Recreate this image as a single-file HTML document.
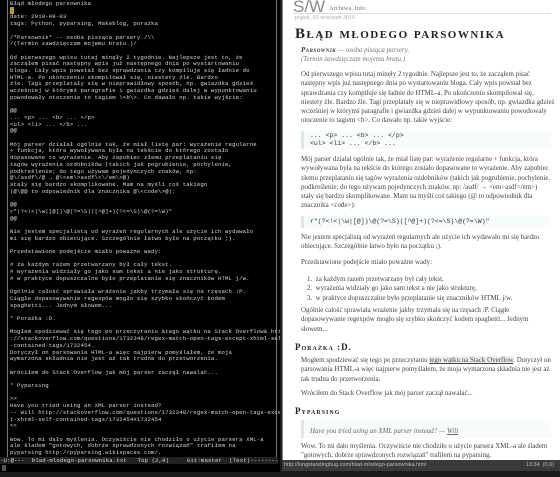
<!DOCTYPE html>
<html><head><meta charset="utf-8"><style>
*{margin:0;padding:0;box-sizing:border-box}
body{width:560px;height:477px;overflow:hidden;background:#1a1c1a;position:relative;font-family:"Liberation Sans",sans-serif}
#term{position:absolute;left:0;top:0;width:280px;height:472px;background:#000;overflow:hidden}
#term .bl{position:absolute;left:7px;top:0;width:1px;height:458px;background:#777}
#term .br{position:absolute;left:276px;top:0;width:1px;height:458px;background:#777}
#tt{position:absolute;left:10px;top:1px;font-family:"Liberation Mono","DejaVu Sans Mono",monospace;font-size:5.65px;letter-spacing:0.14px;line-height:6.7px;color:#d8d8d8;white-space:pre}
#ml{position:absolute;left:0;top:457px;width:278px;height:7px;background:#222;color:#ddd;font-family:"Liberation Mono",monospace;font-size:5.65px;letter-spacing:0.14px;line-height:7px;white-space:pre;overflow:hidden}
#mb{position:absolute;left:0;top:464px;width:278px;height:8px;background:#000}
#mb i{position:absolute;left:2px;top:1px;width:4px;height:6px;background:#555}
#br{position:absolute;left:282px;top:0;width:278px;height:460px;background:#fff;border-left:1px solid #888;font-family:"Liberation Serif",serif;color:#333;overflow:hidden}
.a{position:absolute;white-space:nowrap}
.p{font-size:6.95px;line-height:9.3px;color:#444}
.c{font-family:"Liberation Mono",monospace;font-size:6.5px;color:#333}
.h{font-variant:small-caps;letter-spacing:1px;color:#222}
#sb{position:absolute;left:282px;top:460px;width:278px;height:11px;background:#3a3a3a;color:#bbb;font-size:5.5px;line-height:11px}
</style></head><body>
<div id="term"><div class="bl"></div><div class="br"></div>
<div id="tt">Błąd młodego parsownika
<span style="background:#b8a020;color:#000"> </span>
date: 2010-09-03
tags: Python, pyparsing, Makeblog, porażka

/*Parsownik* -- osoba pisząca parsery./\\
/(Termin zawdzięczam mojemu bratu.)/

Od pierwszego wpisu tutaj minęły 2 tygodnie. Najlepsze jest to, że
zacząłem pisać następny wpis już następnego dnia po wystartowaniu
bloga. Cały wpis powstał bez sprawdzania czy kompiluje się ładnie do
HTML-a. Po ukończeniu skompilował się, niestety źle. Bardzo
źle. Tagi przeplatały się w nieprawidłowy sposób, np. gwiazdka gdzieś
wcześniej w którymś paragrafie i gwiazdka gdzieś dalej w wypunktowaniu
powodowały otoczenie to tagiem \&lt;b\&gt;. Co dawało np. takie wyjście:

@@
... &lt;p&gt; ... &lt;b&gt; ... &lt;/p&gt;
&lt;ul&gt; &lt;li&gt; ... &lt;/b&gt; ...
@@

Mój parser działał ogólnie tak, że miał listę par: wyrażenie regularne
+ funkcja, która wywoływana była na tekście do którego zostało
dopasowane to wyrażenie. Aby zapobiec złemu przeplataniu się
tagów wyrażenia ozdobników (takich jak pogrubienie, pochylenie,
podkreślenie; do tego używam pojedynczych znaków, np:
@\/asdf\/@ → @\&lt;em\&gt;asdf\&lt;\/em\&gt;@)
stały się bardzo skomplikowane. Mam na myśli coś takiego
(@\@@ to odpowiednik dla znacznika @\&lt;code\&gt;@):

@@
r"(?&lt;!&lt;|\w|[@])\@(?=\S)([^@]+)(?&lt;=\S)\@(?=\W)"
@@

Nie jestem specjalistą od wyrażeń regularnych ale użycie ich wydawało
mi się bardzo obiecujące. Szczególnie łatwo było na początku ;).

Przedstawione podejście miało poważne wady:

# za każdym razem przetwarzany był cały tekst.
# wyrażenia widziały go jako sam tekst a nie jako strukturę.
# w praktyce dopuszczalne było przeplatanie się znaczników HTML j/w.

Ogólnie całość sprawiała wrażenie jakby trzymała się na rzęsach :P.
Ciągłe dopasowywanie regexpów mogło się szybko skończyć kodem
spaghetti... Jednym słowem...

* Porażka :D.

Mogłem spodziewać się tego po przeczytaniu &amp;tego wątku na Stack Overflow&amp; http
://stackoverflow.com/questions/1732348/regex-match-open-tags-except-xhtml-self
-contained-tags/1732454.
Dotyczył on parsowania HTML-a więc najpierw pomyślałem, że moja
wymarzona składnia nie jest aż tak trudna do przetworzenia.

Wróciłem do Stack Overflow jak mój parser zaczął nawalać...

* Pyparsing

&gt;&gt;
Have you tried using an XML parser instead?
-- Will http://stackoverflow.com/questions/1732348/regex-match-open-tags-excep
t-xhtml-self-contained-tags/1732454#1732454
&lt;&lt;

Wow. To mi dało myślenia. Oczywiście nie chodziło o użycie parsera XML-a
ale śladem "gotowych, dobrze sprawdzonych rozwiązań" trafiłem na
pyparsing http://pyparsing.wikispaces.com/.</div>
<div id="ml">-U:@---  blad-mlodego-parsownika.txt   Top (2,0)     Git:master  (Text)-----------------------------</div>
<div id="mb"><i></i></div>
</div>

<div id="br">
<div class="a" style="left:10px;top:-3px;font-family:'Liberation Sans',sans-serif;font-size:17px;color:#888;font-weight:300">S/W</div>
<div class="a" style="left:46px;top:5px;font-size:6.5px;color:#777">Archiwa, Info</div>
<div class="a" style="left:10px;top:13px;width:258px;height:1px;background:#ddd"></div>
<div class="a" style="left:12px;top:15px;font-size:6px;color:#aaa">piątek, 03 wrzesień 2010</div>
<div class="a h" style="left:12px;top:26px;font-size:15px;font-weight:bold;letter-spacing:1.5px">Błąd młodego parsownika</div>
<div class="a p" style="left:18px;top:46px;font-style:italic;color:#777"><b class="h" style="color:#333;letter-spacing:0.5px">Parsownik</b> — osoba pisząca parsery.<br>(Termin zawdzięczam mojemu bratu.)</div>
<div class="a p" style="left:18px;top:70px">Od pierwszego wpisu tutaj minęły 2 tygodnie. Najlepsze jest to, że zacząłem pisać<br>następny wpis już następnego dnia po wystartowaniu bloga. Cały wpis powstał bez<br>sprawdzania czy kompiluje się ładnie do HTML-a. Po ukończeniu skompilował się,<br>niestety źle. Bardzo źle. Tagi przeplatały się w nieprawidłowy sposób, np. gwiazdka gdzieś<br>wcześniej w którymś paragrafie i gwiazdka gdzieś dalej w wypunktowaniu powodowały<br>otoczenie to tagiem &lt;b&gt;. Co dawało np. takie wyjście:</div>
<div class="a" style="left:18px;top:131px;width:250px;height:18px;background:#f6fbfb;border-left:3px solid #d5ecec"></div>
<div class="a c" style="left:27px;top:132px;line-height:8px">... &lt;p&gt; ... &lt;b&gt; ... &lt;/p&gt;<br>&lt;ul&gt; &lt;li&gt; ... &lt;/b&gt; ...</div>
<div class="a p" style="left:18px;top:155px">Mój parser działał ogólnie tak, że miał listę par: wyrażenie regularne + funkcja, która<br>wywoływana była na tekście do którego zostało dopasowane to wyrażenie. Aby zapobiec<br>złemu przeplataniu się tagów wyrażenia ozdobników (takich jak pogrubienie, pochylenie,<br>podkreślenie; do tego używam pojedynczych znaków, np: /asdf/ → &lt;em&gt;asdf&lt;/em&gt;)<br>stały się bardzo skomplikowane. Mam na myśli coś takiego (@ to odpowiednik dla<br>znacznika &lt;code&gt;):</div>
<div class="a" style="left:18px;top:216px;width:250px;height:12px;background:#f6fbfb;border-left:3px solid #d5ecec"></div>
<div class="a c" style="left:27px;top:218px">r"(?&lt;!&lt;|\w|[@])\@(?=\S)([^@]+)(?&lt;=\S)\@(?=\W)"</div>
<div class="a p" style="left:18px;top:233px">Nie jestem specjalistą od wyrażeń regularnych ale użycie ich wydawało mi się bardzo<br>obiecujące. Szczególnie łatwo było na początku ;).</div>
<div class="a p" style="left:18px;top:258px">Przedstawione podejście miało poważne wady:</div>
<div class="a p" style="left:24px;top:275px">1.&nbsp; za każdym razem przetwarzany był cały tekst,<br>2.&nbsp; wyrażenia widziały go jako sam tekst a nie jako strukturę,<br>3.&nbsp; w praktyce dopuszczalne było przeplatanie się znaczników HTML j/w.</div>
<div class="a p" style="left:18px;top:306px">Ogólnie całość sprawiała wrażenie jakby trzymała się na rzęsach :P. Ciągłe<br>dopasowywanie regexpów mogło się szybko skończyć kodem spaghetti... Jednym<br>słowem...</div>
<div class="a h" style="left:12px;top:342px;font-size:9px;font-weight:bold">Porażka :D.</div>
<div class="a p" style="left:18px;top:356px">Mogłem spodziewać się tego po przeczytaniu <u style="background:#f0f0f0">tego wątku na Stack Overflow</u>. Dotyczył on<br>parsowania HTML-a więc najpierw pomyślałem, że moja wymarzona składnia nie jest aż<br>tak trudna do przetworzenia.</div>
<div class="a p" style="left:18px;top:389px">Wróciłem do Stack Overflow jak mój parser zaczął nawalać...</div>
<div class="a h" style="left:12px;top:406px;font-size:9px;font-weight:bold">Pyparsing</div>
<div class="a" style="left:18px;top:420px;width:250px;height:18px;background:#f8fcf8;border-left:3px solid #d8eed8"></div>
<div class="a p" style="left:27px;top:427px;font-style:italic;color:#666">Have you tried using an XML parser instead? — <u>Will</u></div>
<div class="a p" style="left:18px;top:442px">Wow. To mi dało myślenia. Oczywiście nie chodziło o użycie parsera XML-a ale śladem<br>"gotowych, dobrze sprawdzonych rozwiązań" trafiłem na pyparsing.</div>
</div>
<div id="sb"><span style="position:absolute;left:2px">http://longstandingbug.com/blad-mlodego-parsownika.html</span><span style="position:absolute;right:6px">13:34&nbsp;&nbsp;(0,0)</span></div>
</body></html>
